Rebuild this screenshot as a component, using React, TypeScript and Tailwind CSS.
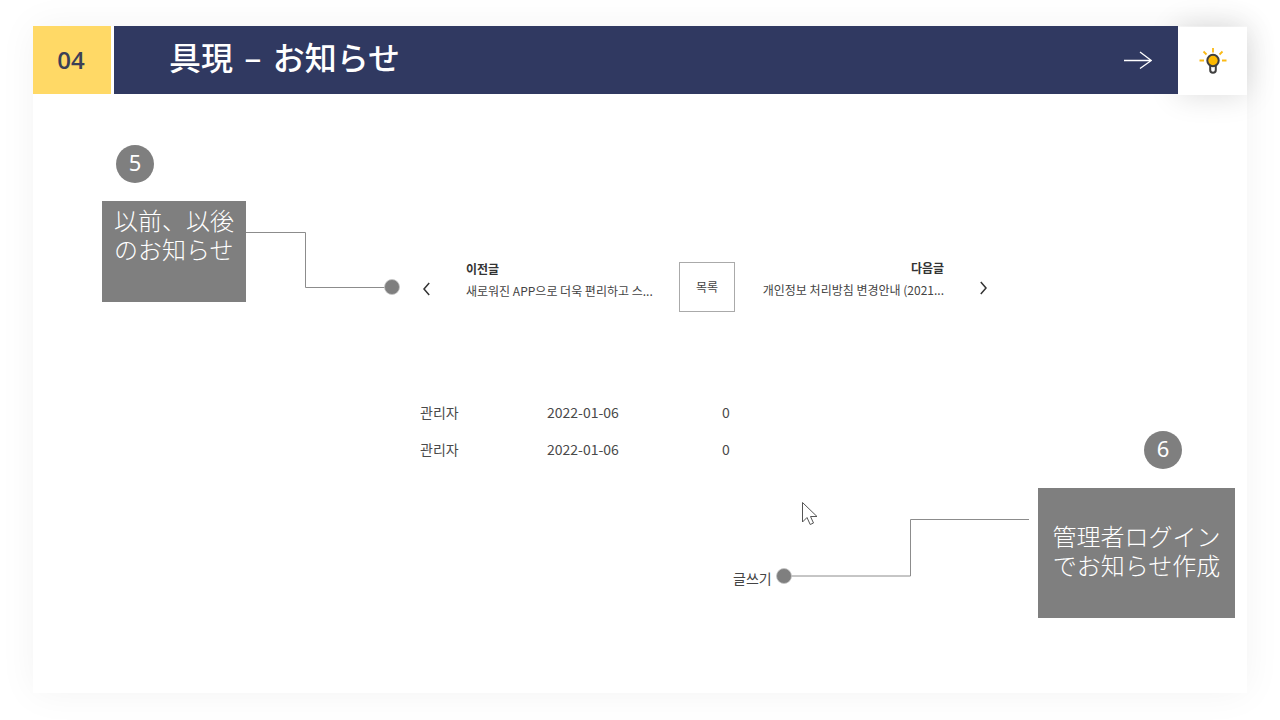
import React from "react";

const posts = [
  { id: 1, author: "관리자", date: "2022-01-06", views: 0 },
  { id: 2, author: "관리자", date: "2022-01-06", views: 0 },
];

function BulbIcon() {
  return (
    <svg width="28" height="28" viewBox="0 0 28 28" fill="none" aria-hidden="true">
      <g stroke="#fbba16" strokeWidth="1.800">
        <path d="M14 1v4.500M4.500 4.500l3 3M23.500 4.500l-3 3M.5 13.500H5M23 13.500h4.500" />
      </g>
      <path d="M11.200 18v5a2.800 2.800 0 0 0 5.600 0v-5z" fill="#fff" stroke="#3f3f3f" strokeWidth="2" />
      <circle cx="14" cy="13.500" r="5.700" fill="#fdb900" stroke="#3f3f3f" strokeWidth="2" />
    </svg>
  );
}

function Badge({ children }: { children: React.ReactNode }) {
  return (
    <div className="flex h-[38px] w-[38px] items-center justify-center rounded-full bg-[#7f7f7f] pb-1 font-['Noto_Sans',sans-serif] text-[22px] leading-none text-white">
      {children}
    </div>
  );
}

function Header() {
  return (
    <header className="flex h-[68px]">
      <div className="flex w-[78px] items-center justify-center bg-[#ffd966] pr-0.5 font-['Open_Sans',sans-serif] text-2xl font-semibold text-[#3b3f56]">
        04
      </div>
      <div className="relative z-10 ml-[3px] flex flex-1 items-center justify-between bg-[#303961] pr-[26px] pl-[55px] text-white">
        <h1 className="pb-2 text-[32px] leading-none font-medium">
          具現<span className="px-1"> – </span>お知らせ
        </h1>
        <button type="button" aria-label="次へ">
          <svg width="28" height="18" viewBox="0 0 28 18" fill="none" stroke="currentColor" strokeWidth="1.300" aria-hidden="true">
            <path d="M0 9.500h27M16 1L27.300 9.500L16 17.500" />
          </svg>
        </button>
      </div>
      <div className="mt-px flex h-[68px] w-[69px] items-center justify-center bg-white shadow-[0_0_30px_rgba(0,0,0,0.15)]">
        <BulbIcon />
      </div>
    </header>
  );
}

function PostNav() {
  return (
    <nav className="flex h-[50px] items-center text-xs text-[#444]">
      <a href="#prev" aria-label="이전글" className="mt-1 ml-[3px]">
        <svg width="7" height="14" viewBox="0 0 7 14" fill="none" stroke="#333" strokeWidth="1.500" aria-hidden="true">
          <path d="M6.200 1L1 7l5.200 6" />
        </svg>
      </a>
      <a href="#prev" className="ml-9 block w-[213px] pb-3.5 leading-[22px] whitespace-nowrap">
        <strong className="block font-bold text-[#333]">이전글</strong>
        새로워진 APP으로 더욱 편리하고 스...
      </a>
      <button type="button" className="h-[50px] w-[56px] border border-[#aaa] bg-white">
        목록
      </button>
      <a href="#next" className="block w-[209px] pb-4 text-right leading-[22px] whitespace-nowrap">
        <strong className="block font-bold text-[#333]">다음글</strong>
        개인정보 처리방침 변경안내 (2021...
      </a>
      <a href="#next" aria-label="다음글" className="mt-0.5 ml-9">
        <svg width="7" height="14" viewBox="0 0 7 14" fill="none" stroke="#333" strokeWidth="1.500" aria-hidden="true">
          <path d="M.8 1L6 7L.8 13" />
        </svg>
      </a>
    </nav>
  );
}

function PostTable() {
  return (
    <table className="mt-[81px] table-fixed text-left text-sm text-[#4a4a4a]">
      <tbody>
        {posts.map((post) => (
          <tr key={post.id} className="h-[37px]">
            <td className="w-[127px]">{post.author}</td>
            <td className="w-[175px]">{post.date}</td>
            <td className="w-4">{post.views}</td>
          </tr>
        ))}
      </tbody>
    </table>
  );
}

export default function App() {
  return (
    <div className="flex min-h-screen flex-col bg-white px-[33px] pt-[26px] pb-[27px] font-['Noto_Sans_CJK_JP',sans-serif]">
      <div className="flex flex-1 flex-col bg-white shadow-[0_0_36px_rgba(0,0,0,0.05)]">
        <Header />
        <div className="relative flex flex-1 items-start">
          <svg className="absolute top-[130px] left-[213px]" width="156" height="72" viewBox="0 0 156 72" fill="none" aria-hidden="true">
            <path d="M0 8.500H59.500V63.500H139" stroke="#8c8c8c" />
            <circle cx="146" cy="63" r="7.500" fill="#7f7f7f" stroke="#c4c4c4" strokeWidth=".8" />
          </svg>
          <svg className="absolute top-[417px] left-[743px]" width="256" height="76" viewBox="0 0 256 76" fill="none" aria-hidden="true">
            <path d="M253 8.500H134.500V65H15" stroke="#8c8c8c" />
            <circle cx="8" cy="65" r="7.500" fill="#7f7f7f" stroke="#c4c4c4" strokeWidth=".8" />
          </svg>
          <svg className="absolute top-[407px] left-[768px]" width="18" height="26" viewBox="0 0 18 26" fill="#fff" stroke="#555" aria-hidden="true">
            <path d="M1.500 1.500V21L6 16.500L9.200 23.500L12.500 22L9.500 15.500H16z" />
          </svg>

          <aside className="ml-[69px] w-36 shrink-0 pt-[51px]">
            <div className="pl-3.5">
              <Badge>5</Badge>
            </div>
            <p className="mt-[18px] h-[101px] bg-[#7f7f7f] pt-1 pl-3 text-2xl leading-[29px] font-light text-white">
              以前、以後
              <br />
              のお知らせ
            </p>
          </aside>

          <main className="ml-[174px] flex-1 pt-[168px] font-['Noto_Sans_CJK_KR',sans-serif]">
            <PostNav />
            <PostTable />
            <a href="#write" className="mt-[101px] ml-[313px] inline-block text-sm text-[#444]">
              글쓰기
            </a>
          </main>

          <aside className="mr-3 w-[197px] shrink-0 pt-[337px]">
            <div className="pl-[106px]">
              <Badge>6</Badge>
            </div>
            <p className="mt-[19px] h-[130px] bg-[#7f7f7f] pt-[33px] text-center text-2xl leading-[29px] font-light text-white">
              管理者ログイン
              <br />
              でお知らせ作成
            </p>
          </aside>
        </div>
      </div>
    </div>
  );
}
